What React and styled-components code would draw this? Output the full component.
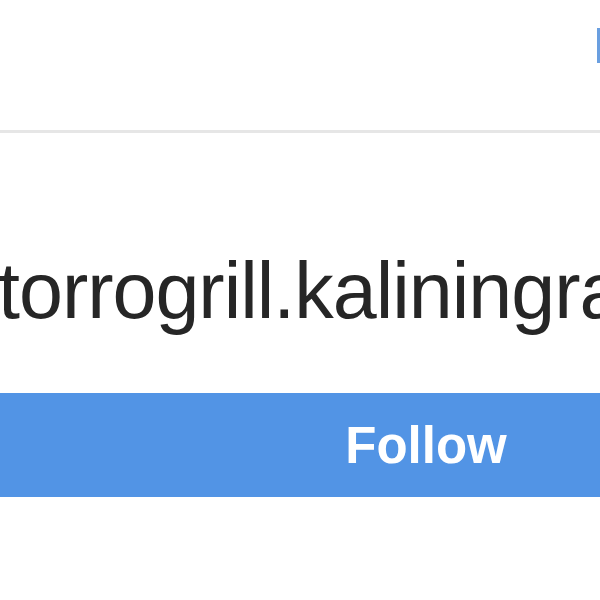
import React from 'react';
import styled, { createGlobalStyle } from 'styled-components';

const GlobalStyle = createGlobalStyle`
  html, body {
    margin: 0;
    padding: 0;
    background: #ffffff;
    overflow: hidden;
  }
  body {
    font-family: "Liberation Sans", Arial, sans-serif;
  }
`;

const Page = styled.div`
  width: 852px;
  height: 600px;
  background: #ffffff;
`;

const TopBar = styled.div`
  height: 133px;
  width: 600px;
  border-bottom: 3px solid #e6e6e6;
  display: flex;
  justify-content: flex-end;
  align-items: flex-start;
  padding-top: 28px;
  box-sizing: border-box;
`;

const EdgeIcon = styled.svg`
  display: block;
  width: 3px;
  height: 35px;
`;

const Profile = styled.div`
  padding-top: 113px;
`;

const Username = styled.div`
  font-size: 79px;
  line-height: 90px;
  height: 90px;
  color: #262626;
  white-space: nowrap;
  letter-spacing: -1px;
  margin-left: -2px;
`;

const FollowButton = styled.button`
  margin-top: 57px;
  width: 852px;
  height: 104px;
  border: none;
  padding: 0;
  background: #5294e5;
  color: #ffffff;
  font-family: "Liberation Sans", Arial, sans-serif;
  font-weight: 700;
  font-size: 51px;
  display: flex;
  align-items: center;
  justify-content: center;
`;

export default function App() {
  return (
    <Page>
      <GlobalStyle />
      <TopBar>
        <EdgeIcon viewBox="0 0 3 35">
          <line x1="1.5" y1="0" x2="1.5" y2="35" stroke="#6a9fe0" strokeWidth="3" />
        </EdgeIcon>
      </TopBar>
      <Profile>
        <Username>torrogrill.kaliningrad</Username>
        <FollowButton>Follow</FollowButton>
      </Profile>
    </Page>
  );
}
